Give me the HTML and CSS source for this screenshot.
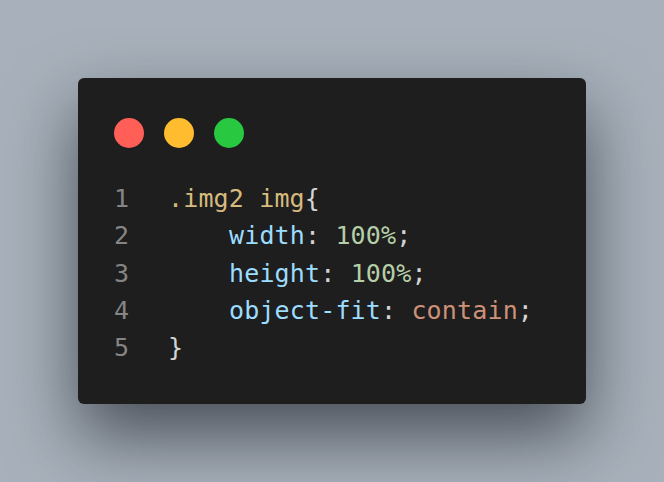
FILE: index.html
```html
<!DOCTYPE html>
<html lang="en">
<head>
<meta charset="utf-8">
<title>Code snippet</title>
<link rel="stylesheet" href="styles.css">
</head>
<body>
<main class="stage">
  <section class="window">
    <div class="dots">
      <span class="dot dot-red"></span>
      <span class="dot dot-yellow"></span>
      <span class="dot dot-green"></span>
    </div>
    <div class="code">
      <div class="line"><span class="ln">1</span><span class="src"><span class="sel">.img2 img</span><span class="pun">{</span></span></div>
      <div class="line"><span class="ln">2</span><span class="src indent"><span class="prop">width</span><span class="pun">: </span><span class="num">100%</span><span class="pun">;</span></span></div>
      <div class="line"><span class="ln">3</span><span class="src indent"><span class="prop">height</span><span class="pun">: </span><span class="num">100%</span><span class="pun">;</span></span></div>
      <div class="line"><span class="ln">4</span><span class="src indent"><span class="prop">object-fit</span><span class="pun">: </span><span class="str">contain</span><span class="pun">;</span></span></div>
      <div class="line"><span class="ln">5</span><span class="src"><span class="pun">}</span></span></div>
    </div>
  </section>
</main>
</body>
</html>
```
FILE: styles.css
```css
html, body {
  margin: 0;
  padding: 0;
}

body {
  background: #a8b1bb;
  font-family: "DejaVu Sans Mono", "Liberation Mono", monospace;
}

.stage {
  height: 100vh;
  display: flex;
  align-items: center;
  justify-content: center;
}

.window {
  width: 508px;
  height: 326px;
  box-sizing: border-box;
  background: #1e1e1e;
  border-radius: 6px;
  padding: 40px 36px 0 36px;
  box-shadow: 0 32px 70px rgba(14, 20, 28, 0.62);
}

.dots {
  display: flex;
  gap: 20px;
}

.dot {
  width: 30px;
  height: 30px;
  border-radius: 50%;
}

.dot-red { background: #ff5f57; }
.dot-yellow { background: #febc2e; }
.dot-green { background: #28c840; }

.code {
  margin-top: 32px;
  font-size: 25px;
  letter-spacing: 0.15px;
  line-height: 37.3px;
  color: #d4d4d4;
}

.line {
  display: flex;
  white-space: pre;
}

.ln {
  width: 54px;
  color: #858585;
}

.indent {
  padding-left: 61px;
}

.sel { color: #d7ba7d; }
.pun { color: #d4d4d4; }
.prop { color: #9cdcfe; }
.num { color: #b5cea8; }
.str { color: #ce9178; }
```
